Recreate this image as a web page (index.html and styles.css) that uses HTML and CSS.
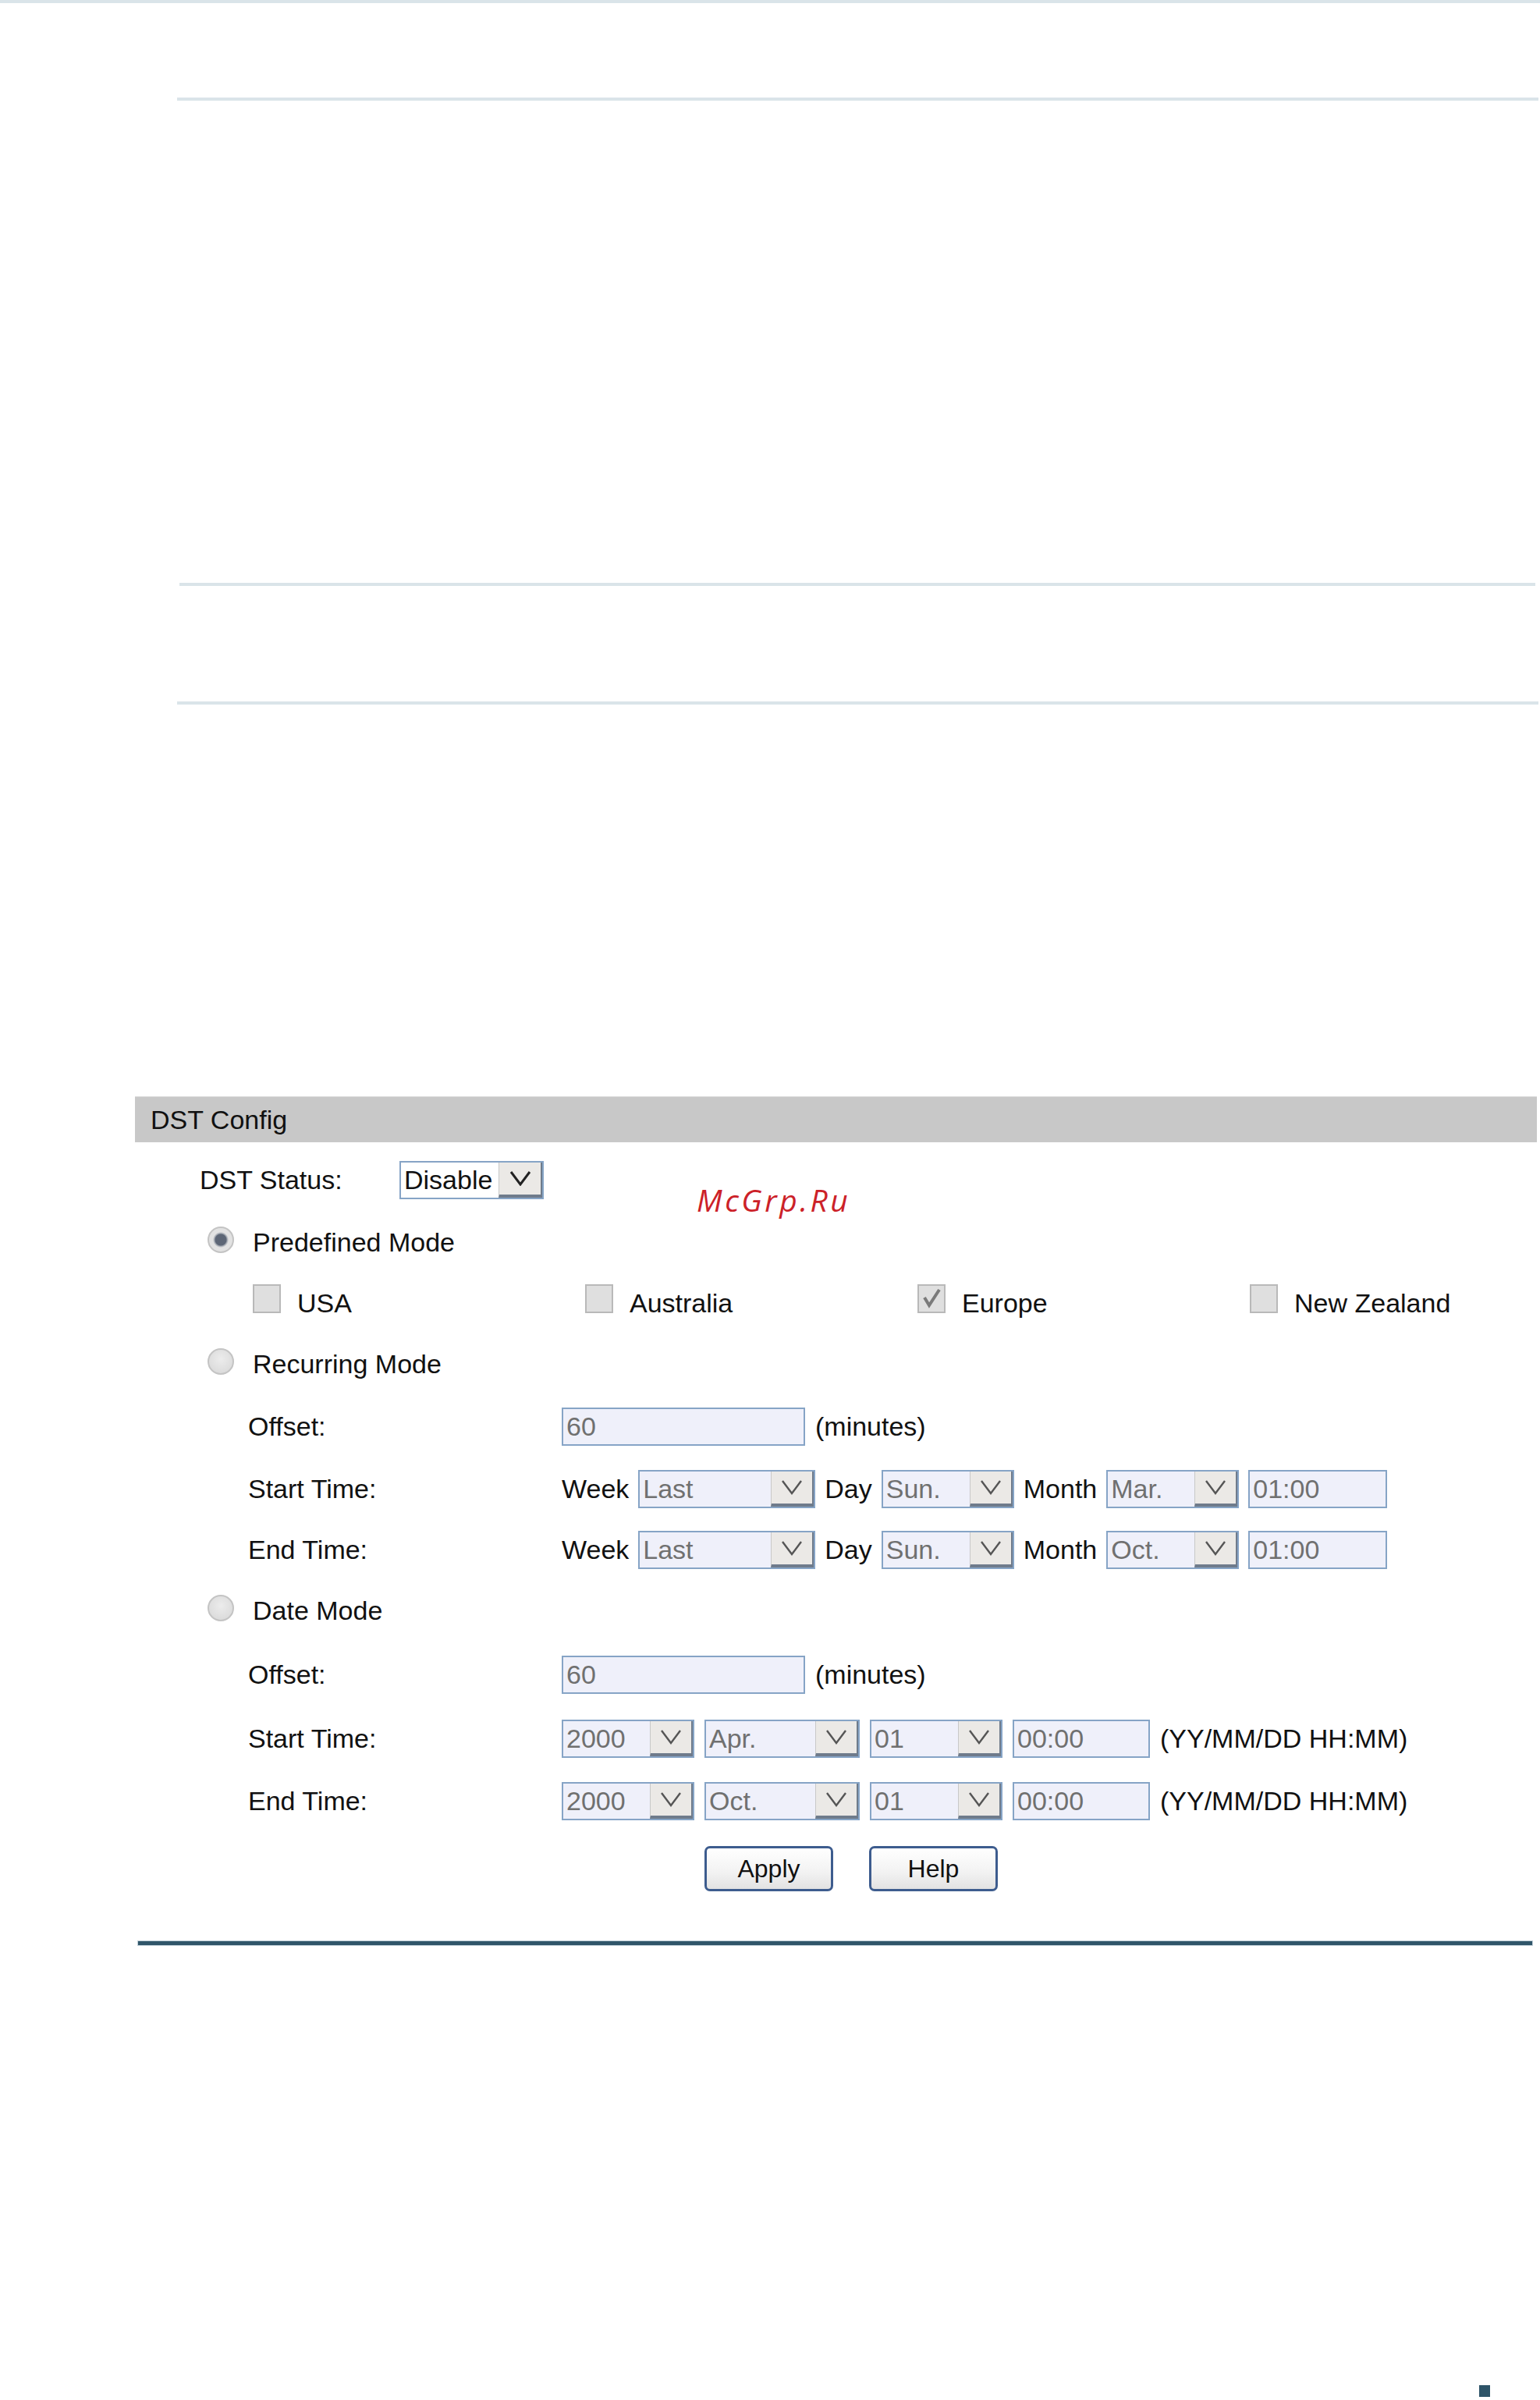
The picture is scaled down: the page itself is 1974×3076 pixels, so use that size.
FILE: index.html
```
<!DOCTYPE html>
<html lang="en">
<head>
  <meta charset="UTF-8" />
  <meta name="viewport" content="width=device-width, initial-scale=1" />
  <title>DST Config</title>
  <link rel="stylesheet" href="styles.css">
</head>
<body>

<div class="page">
  <div class="rule rule-top"></div>
  <div class="rule rule-a"></div>
  <div class="rule rule-b"></div>
  <div class="rule rule-c"></div>

  <div class="panel">
    <div class="panel-title">DST Config</div>

    <div class="row status">
      <span class="status-label">DST Status:</span>
      <div class="select select-status">
        <span class="value">Disable</span>
        <span class="arrow"><svg width="30" height="20" viewBox="0 0 30 20"><path d="M3 2 L15 18 L27 2" fill="none" stroke="#222" stroke-width="3"/></svg></span>
      </div>
    </div>

    <div class="row mode">
      <span class="radio checked"></span>
      <span>Predefined Mode</span>
    </div>

    <div class="row short zones">
      <div class="zone"><span class="check"></span>USA</div>
      <div class="zone"><span class="check"></span>Australia</div>
      <div class="zone"><span class="check checked"><svg width="30" height="30" viewBox="0 0 30 30"><path d="M6 14 L12 24 L25 4" fill="none" stroke="#7a7a7a" stroke-width="4"/></svg></span>Europe</div>
      <div class="zone"><span class="check"></span>New Zealand</div>
    </div>

    <div class="row mode">
      <span class="radio"></span>
      <span>Recurring Mode</span>
    </div>

    <div class="row field">
      <span class="field-label">Offset:</span>
      <div class="controls">
        <span class="input input-offset">60</span>
        <span>(minutes)</span>
      </div>
    </div>

    <div class="row field">
      <span class="field-label">Start Time:</span>
      <div class="controls compact">
        <span>Week</span>
        <div class="select w-week"><span class="value">Last</span><span class="arrow"><svg width="28" height="20" viewBox="0 0 28 20"><path d="M2 2 L14 18 L26 2" fill="none" stroke="#555" stroke-width="2.4"/></svg></span></div>
        <span>Day</span>
        <div class="select w-short"><span class="value">Sun.</span><span class="arrow"><svg width="28" height="20" viewBox="0 0 28 20"><path d="M2 2 L14 18 L26 2" fill="none" stroke="#555" stroke-width="2.4"/></svg></span></div>
        <span>Month</span>
        <div class="select w-short"><span class="value">Mar.</span><span class="arrow"><svg width="28" height="20" viewBox="0 0 28 20"><path d="M2 2 L14 18 L26 2" fill="none" stroke="#555" stroke-width="2.4"/></svg></span></div>
        <span class="input input-time">01:00</span>
      </div>
    </div>

    <div class="row short field">
      <span class="field-label">End Time:</span>
      <div class="controls compact">
        <span>Week</span>
        <div class="select w-week"><span class="value">Last</span><span class="arrow"><svg width="28" height="20" viewBox="0 0 28 20"><path d="M2 2 L14 18 L26 2" fill="none" stroke="#555" stroke-width="2.4"/></svg></span></div>
        <span>Day</span>
        <div class="select w-short"><span class="value">Sun.</span><span class="arrow"><svg width="28" height="20" viewBox="0 0 28 20"><path d="M2 2 L14 18 L26 2" fill="none" stroke="#555" stroke-width="2.4"/></svg></span></div>
        <span>Month</span>
        <div class="select w-short"><span class="value">Oct.</span><span class="arrow"><svg width="28" height="20" viewBox="0 0 28 20"><path d="M2 2 L14 18 L26 2" fill="none" stroke="#555" stroke-width="2.4"/></svg></span></div>
        <span class="input input-time">01:00</span>
      </div>
    </div>

    <div class="row mode">
      <span class="radio"></span>
      <span>Date Mode</span>
    </div>

    <div class="row tall field">
      <span class="field-label">Offset:</span>
      <div class="controls">
        <span class="input input-offset">60</span>
        <span>(minutes)</span>
      </div>
    </div>

    <div class="row field">
      <span class="field-label">Start Time:</span>
      <div class="controls">
        <div class="select w-short"><span class="value">2000</span><span class="arrow"><svg width="28" height="20" viewBox="0 0 28 20"><path d="M2 2 L14 18 L26 2" fill="none" stroke="#555" stroke-width="2.4"/></svg></span></div>
        <div class="select w-month"><span class="value">Apr.</span><span class="arrow"><svg width="28" height="20" viewBox="0 0 28 20"><path d="M2 2 L14 18 L26 2" fill="none" stroke="#555" stroke-width="2.4"/></svg></span></div>
        <div class="select w-short"><span class="value">01</span><span class="arrow"><svg width="28" height="20" viewBox="0 0 28 20"><path d="M2 2 L14 18 L26 2" fill="none" stroke="#555" stroke-width="2.4"/></svg></span></div>
        <span class="input input-date">00:00</span>
        <span>(YY/MM/DD HH:MM)</span>
      </div>
    </div>

    <div class="row field">
      <span class="field-label">End Time:</span>
      <div class="controls">
        <div class="select w-short"><span class="value">2000</span><span class="arrow"><svg width="28" height="20" viewBox="0 0 28 20"><path d="M2 2 L14 18 L26 2" fill="none" stroke="#555" stroke-width="2.4"/></svg></span></div>
        <div class="select w-month"><span class="value">Oct.</span><span class="arrow"><svg width="28" height="20" viewBox="0 0 28 20"><path d="M2 2 L14 18 L26 2" fill="none" stroke="#555" stroke-width="2.4"/></svg></span></div>
        <div class="select w-short"><span class="value">01</span><span class="arrow"><svg width="28" height="20" viewBox="0 0 28 20"><path d="M2 2 L14 18 L26 2" fill="none" stroke="#555" stroke-width="2.4"/></svg></span></div>
        <span class="input input-date">00:00</span>
        <span>(YY/MM/DD HH:MM)</span>
      </div>
    </div>

    <div class="row actions">
      <button class="btn">Apply</button>
      <button class="btn">Help</button>
    </div>
  </div>

  <div class="footer-rule"></div>
  <div class="page-mark"></div>

  <div class="watermark">McGrp.Ru</div>
</div>

</body>
</html>
```

FILE: styles.css
```
body {
  margin: 0;
  background: #fff;
  font-family: "Liberation Sans", Arial, sans-serif;
  color: #111;
}
.page {
  position: relative;
  width: 1974px;
  height: 3076px;
  overflow: hidden;
}
.rule {
  height: 4px;
  background: #dae4e9;
}
.rule-top {
  width: 1974px;
}
.rule-a {
  margin: 121px 0 0 227px;
  width: 1745px;
}
.rule-b {
  margin: 618px 0 0 230px;
  width: 1738px;
}
.rule-c {
  margin: 148px 0 0 227px;
  width: 1745px;
}

.panel {
  margin: 502px 0 0 173px;
  width: 1797px;
  font-size: 34px;
}
.panel-title {
  height: 59px;
  line-height: 59px;
  padding-left: 20px;
  background: #c8c8c8;
  border-top: 1px solid #dedede;
  box-sizing: border-box;
  margin-bottom: 8px;
}

.row {
  display: flex;
  align-items: center;
  height: 80px;
}
.row.short {
  height: 76px;
}
.row.tall {
  height: 84px;
}

.status {
  padding-left: 83px;
}
.status-label {
  width: 256px;
}

.mode {
  padding-left: 93px;
}
.radio {
  width: 34px;
  height: 34px;
  border-radius: 50%;
  border: 2px solid #c4c4c4;
  box-sizing: border-box;
  background: radial-gradient(circle at 50% 40%, #ececec, #d6d6d6);
  margin-right: 24px;
  margin-top: -6px;
}
.radio.checked {
  background: radial-gradient(circle, #5d6676 0 7px, #9aa0aa 8px, #e2e2e2 10px);
}

.zones {
  padding-left: 151px;
  display: grid;
  grid-template-columns: 426px 426px 426px 426px;
}
.zone {
  display: flex;
  align-items: center;
}
.check {
  width: 36px;
  height: 37px;
  border: 2px solid #b9b9b9;
  box-sizing: border-box;
  background: #dfdfdf;
  margin-right: 21px;
  margin-top: -12px;
  display: flex;
  align-items: center;
  justify-content: center;
}

.field {
  padding-left: 145px;
}
.field-label {
  width: 402px;
}
.controls {
  display: flex;
  align-items: center;
  gap: 13px;
}
.controls.compact {
  gap: 12px;
}

.input,
.select {
  height: 49px;
  border: 2px solid #86a4c6;
  box-sizing: border-box;
  background: #eff0fa;
  color: #707070;
  display: flex;
  align-items: center;
}
.input {
  padding-left: 4px;
}
.input-offset {
  width: 312px;
}
.input-time {
  width: 178px;
}
.input-date {
  width: 176px;
}

.select .value {
  flex: 1;
  padding-left: 4px;
}
.select .arrow {
  width: 55px;
  height: 100%;
  box-sizing: border-box;
  background: #ebe9e6;
  border-left: 1px solid #c8c8c8;
  border-right: 2px solid #6f7b8b;
  border-bottom: 4px solid #6f7b8b;
  display: flex;
  align-items: center;
  justify-content: center;
}
.select-status {
  width: 185px;
  background: #fff;
  color: #111;
}
.select-status .arrow {
  width: 56px;
}
.w-week {
  width: 227px;
}
.w-short {
  width: 170px;
}
.w-month {
  width: 199px;
}

.actions {
  height: 88px;
  padding-left: 730px;
  padding-top: 6px;
  box-sizing: border-box;
  gap: 46px;
}
.btn {
  width: 165px;
  height: 58px;
  border: 3px solid #3d5c8e;
  border-radius: 7px;
  background: linear-gradient(#ffffff, #f2f2f2 60%, #e2e2e2);
  font-family: "Liberation Sans", Arial, sans-serif;
  font-size: 32px;
  color: #111;
  padding: 0;
}

.footer-rule {
  margin: 52px 0 0 177px;
  width: 1787px;
  height: 5px;
  background: #30566a;
  box-shadow: 0 0 0 1px #c3d1d9;
}
.page-mark {
  margin: 564px 0 0 1896px;
  width: 14px;
  height: 15px;
  background: #2e5468;
}

.watermark {
  position: absolute;
  left: 893px;
  top: 1513px;
  font-family: "Open Sans", "DejaVu Sans", sans-serif;
  font-style: italic;
  font-size: 39px;
  line-height: 50px;
  letter-spacing: 3.5px;
  color: #cc2128;
}
```
